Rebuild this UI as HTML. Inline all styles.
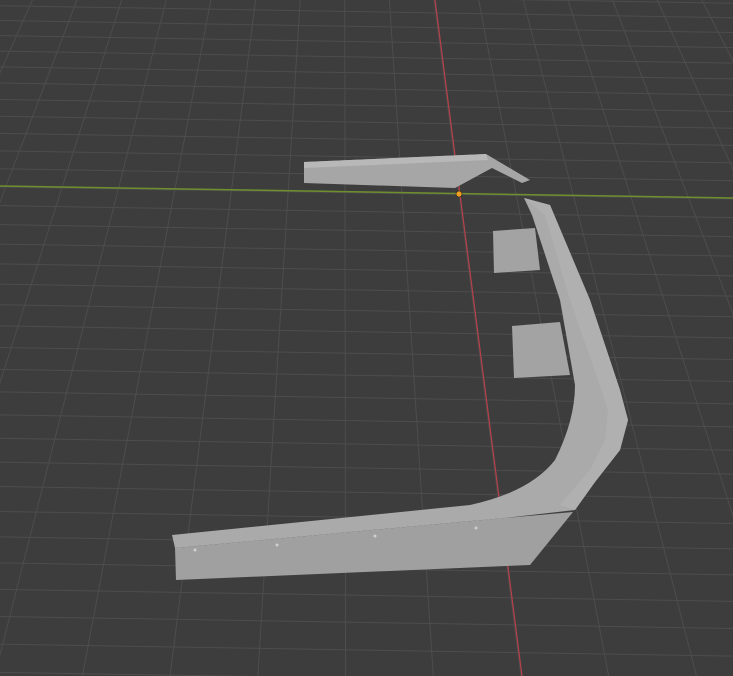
<!DOCTYPE html>
<html><head><meta charset="utf-8"><style>
html,body{margin:0;padding:0;background:#3d3d3d;overflow:hidden}
svg{display:block}
</style></head><body>
<svg id="s" width="733" height="676" viewBox="0 0 733 676" xmlns="http://www.w3.org/2000/svg">
<rect width="733" height="676" fill="#3d3d3d"/>
<g id="grid" stroke="#4d4d4d" stroke-width="1"></g>
<line x1="0" y1="186" x2="733" y2="198" stroke="#6f8f2f" stroke-width="1.5"/>
<line x1="435" y1="0" x2="522" y2="676" stroke="#b8404a" stroke-width="1.2"/>
<polygon points="304,162 486,154 530,180 522,183 492,168 455,188 304,183" fill="#a6a6a6"/>
<polygon points="304,162 486,154 488,160 304,168" fill="#b8b8b8"/>
<polygon points="493,231 535,228 540,270 494,273" fill="#a3a3a3"/>
<polygon points="512,326 560,322 570,375 514,378" fill="#a3a3a3"/>
<path d="M524,198 L550,205 L590,300 L620,390 L628,420 L620,450 L595,482 L575,510 L505,518 L175,548 L172,535 L470,505 Q530,492 555,460 Q575,420 575,385 L560,300 L532,215 Z" fill="#aaaaaa"/>
<path d="M524,198 L550,205 L590,300 L620,390 L628,420 L620,450 L595,482 L575,510 L560,505 L590,470 L605,440 L608,410 L598,380 L570,300 L545,215 Z" fill="#b0b0b0"/>
<polygon points="175,548 505,518 573,512 530,565 176,580" fill="#a0a0a0"/>
<g fill="#cfcfcf"><circle cx="195" cy="550" r="1.5"/><circle cx="277" cy="545" r="1.5"/><circle cx="375" cy="536" r="1.5"/><circle cx="476" cy="528" r="1.5"/></g>
<circle cx="459" cy="194" r="3" fill="#f0a020" stroke="#222" stroke-width="0.6"/>
</svg>
<script>
var g=document.getElementById('grid'),ns='http://www.w3.org/2000/svg';
function L(a,b,c,d){var l=document.createElementNS(ns,'line');l.setAttribute('x1',a);l.setAttribute('y1',b);l.setAttribute('x2',c);l.setAttribute('y2',d);g.appendChild(l);}
var vx=344,vy=-700;
for(var k=-30;k<=30;k++){var x0=459+57*k,y0=194;
 var t=(676-vy)/(y0-vy);L(vx+(x0-vx)*0.6,vy+(y0-vy)*0.6,vx+(x0-vx)*t,676);}
var ys=[];var y=187;while(y<700){ys.push(y);y=y+0.021*(y+700);}
y=187;while(y>-10){y=(y-0.021*700)/1.021;ys.push(y);}
ys.forEach(function(yy){L(0,yy,733,yy+12);});
</script>
</body></html>
